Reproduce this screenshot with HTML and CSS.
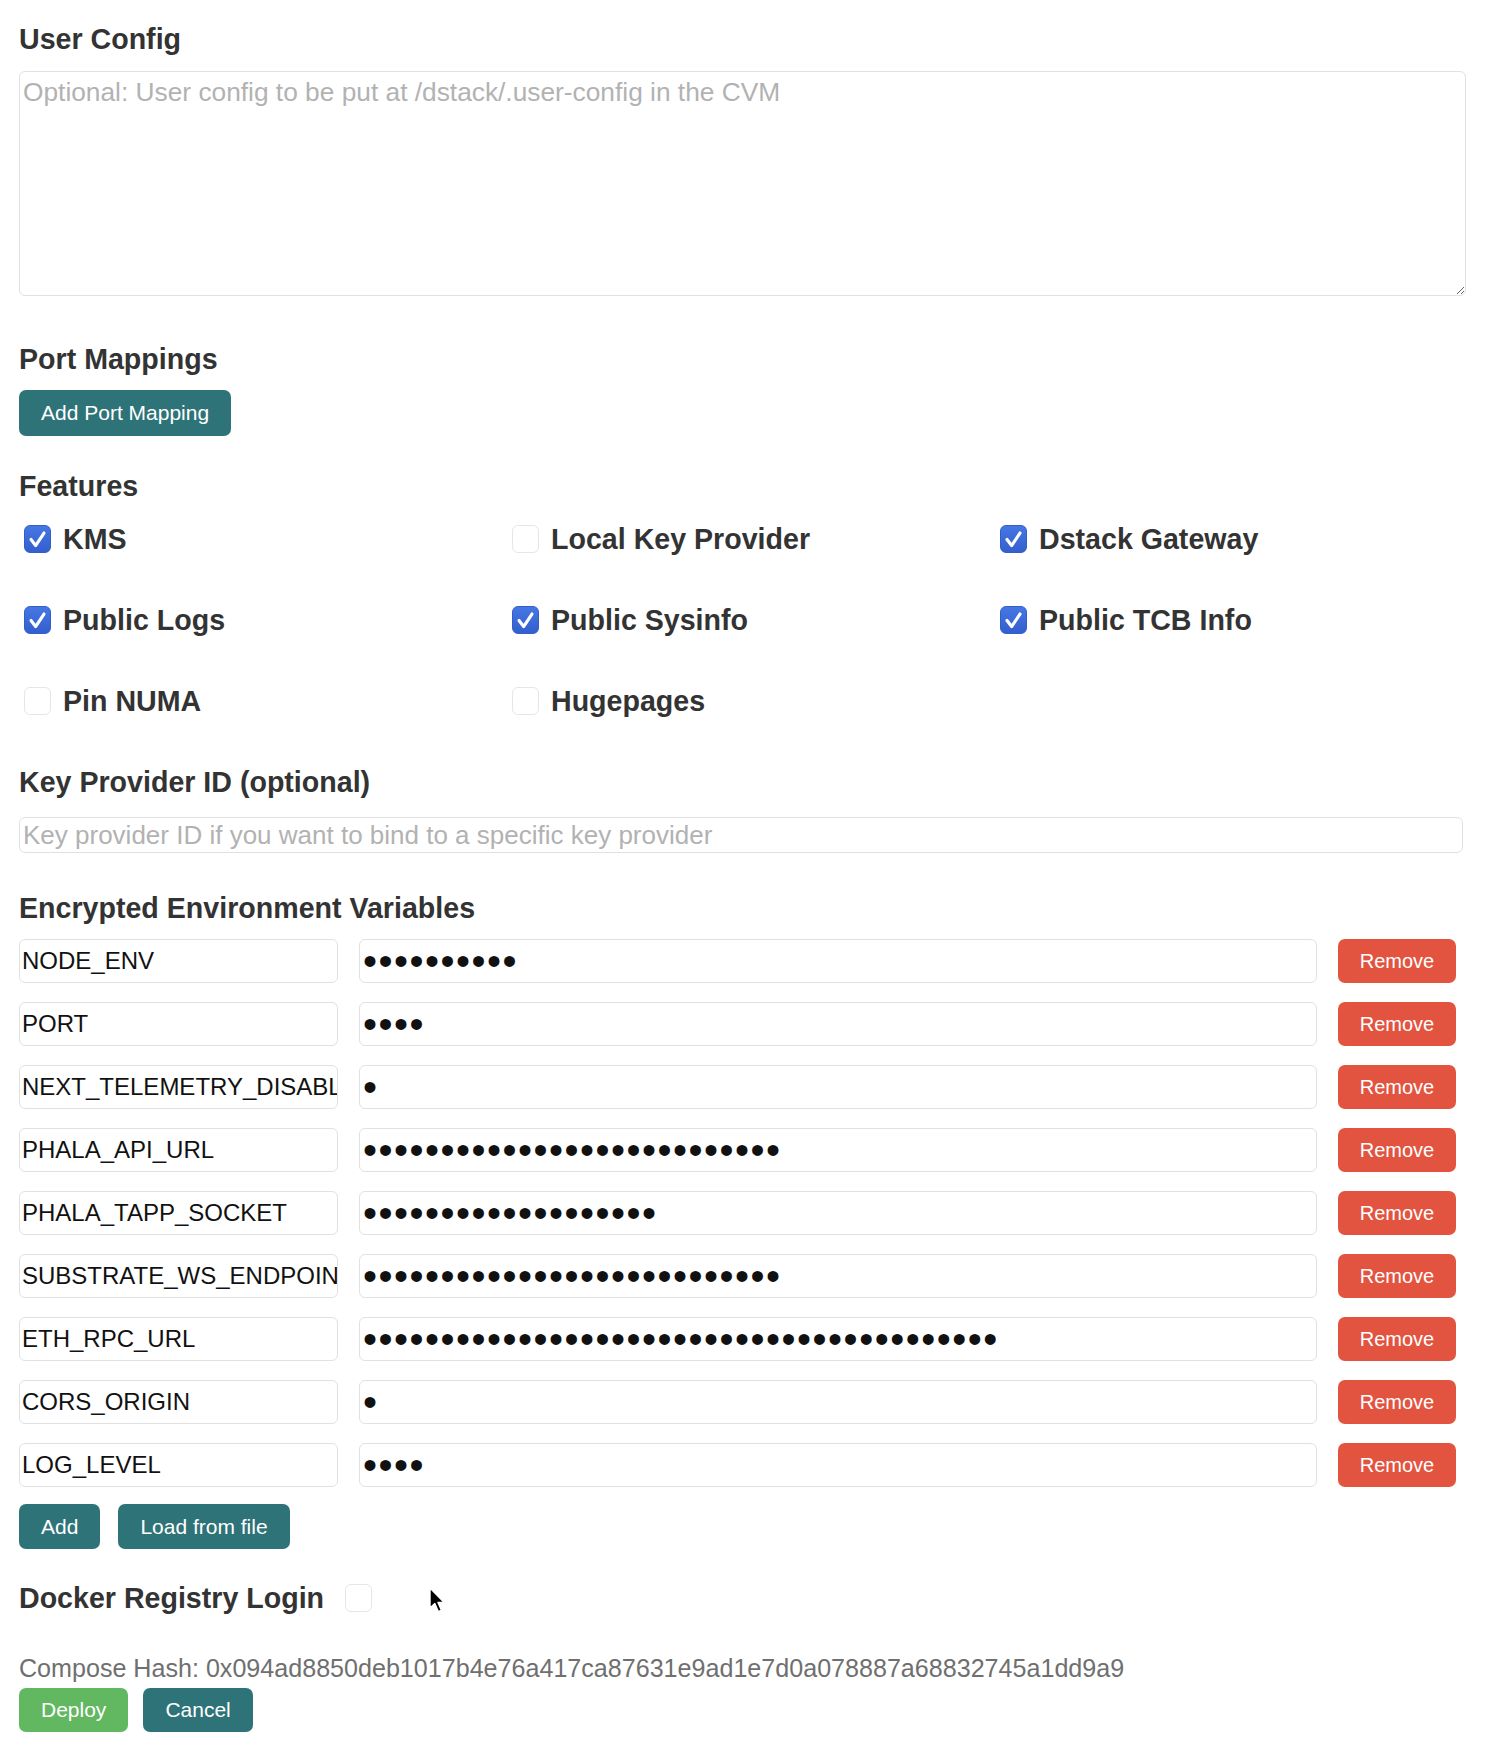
FILE: index.html
```html
<!DOCTYPE html>
<html lang="en">
<head>
<meta charset="utf-8">
<title>Deploy CVM</title>
<link rel="stylesheet" href="styles.css">
</head>
<body>
<form class="form">
  <div class="field">
    <label class="label" for="user-config">User Config</label>
    <textarea id="user-config" class="textarea" placeholder="Optional: User config to be put at /dstack/.user-config in the CVM"></textarea>
  </div>

  <div class="field port">
    <div class="label">Port Mappings</div>
    <button type="button" class="btn btn-teal btn-port">Add Port Mapping</button>
  </div>

  <div class="field features">
    <div class="label">Features</div>
    <div class="feature-grid">
      <label class="feature"><input type="checkbox" class="cb-input" checked><span class="cb"><svg viewBox="0 0 27 27" width="27" height="27"><path d="M6.5 13.5 L11.5 20 L20.5 6.5" /></svg></span><span>KMS</span></label>
      <label class="feature"><input type="checkbox" class="cb-input"><span class="cb"><svg viewBox="0 0 27 27" width="27" height="27"><path d="M6.5 13.5 L11.5 20 L20.5 6.5" /></svg></span><span>Local Key Provider</span></label>
      <label class="feature"><input type="checkbox" class="cb-input" checked><span class="cb"><svg viewBox="0 0 27 27" width="27" height="27"><path d="M6.5 13.5 L11.5 20 L20.5 6.5" /></svg></span><span>Dstack Gateway</span></label>
      <label class="feature"><input type="checkbox" class="cb-input" checked><span class="cb"><svg viewBox="0 0 27 27" width="27" height="27"><path d="M6.5 13.5 L11.5 20 L20.5 6.5" /></svg></span><span>Public Logs</span></label>
      <label class="feature"><input type="checkbox" class="cb-input" checked><span class="cb"><svg viewBox="0 0 27 27" width="27" height="27"><path d="M6.5 13.5 L11.5 20 L20.5 6.5" /></svg></span><span>Public Sysinfo</span></label>
      <label class="feature"><input type="checkbox" class="cb-input" checked><span class="cb"><svg viewBox="0 0 27 27" width="27" height="27"><path d="M6.5 13.5 L11.5 20 L20.5 6.5" /></svg></span><span>Public TCB Info</span></label>
      <label class="feature"><input type="checkbox" class="cb-input"><span class="cb"><svg viewBox="0 0 27 27" width="27" height="27"><path d="M6.5 13.5 L11.5 20 L20.5 6.5" /></svg></span><span>Pin NUMA</span></label>
      <label class="feature"><input type="checkbox" class="cb-input"><span class="cb"><svg viewBox="0 0 27 27" width="27" height="27"><path d="M6.5 13.5 L11.5 20 L20.5 6.5" /></svg></span><span>Hugepages</span></label>
    </div>
  </div>

  <div class="field key-provider">
    <label class="label" for="kp">Key Provider ID (optional)</label>
    <input id="kp" type="text" class="input" placeholder="Key provider ID if you want to bind to a specific key provider">
  </div>

  <div class="field env">
    <div class="label">Encrypted Environment Variables</div>
    <div class="env-list">
      <div class="env-row"><input class="env-key" type="text" value="NODE_ENV"><input class="env-val" type="password" value="production"><button type="button" class="btn btn-remove">Remove</button></div>
      <div class="env-row"><input class="env-key" type="text" value="PORT"><input class="env-val" type="password" value="3000"><button type="button" class="btn btn-remove">Remove</button></div>
      <div class="env-row"><input class="env-key" type="text" value="NEXT_TELEMETRY_DISABLED"><input class="env-val" type="password" value="1"><button type="button" class="btn btn-remove">Remove</button></div>
      <div class="env-row"><input class="env-key" type="text" value="PHALA_API_URL"><input class="env-val" type="password" value="https://cloud-api.phala.net"><button type="button" class="btn btn-remove">Remove</button></div>
      <div class="env-row"><input class="env-key" type="text" value="PHALA_TAPP_SOCKET"><input class="env-val" type="password" value="/var/run/tappd.sock"><button type="button" class="btn btn-remove">Remove</button></div>
      <div class="env-row"><input class="env-key" type="text" value="SUBSTRATE_WS_ENDPOINT"><input class="env-val" type="password" value="wss://poc6.phala.network/ws"><button type="button" class="btn btn-remove">Remove</button></div>
      <div class="env-row"><input class="env-key" type="text" value="ETH_RPC_URL"><input class="env-val" type="password" value="https://eth-mainnet.example.com/v2/abcdef"><button type="button" class="btn btn-remove">Remove</button></div>
      <div class="env-row"><input class="env-key" type="text" value="CORS_ORIGIN"><input class="env-val" type="password" value="*"><button type="button" class="btn btn-remove">Remove</button></div>
      <div class="env-row"><input class="env-key" type="text" value="LOG_LEVEL"><input class="env-val" type="password" value="info"><button type="button" class="btn btn-remove">Remove</button></div>
    </div>
    <div class="env-actions">
      <button type="button" class="btn btn-teal">Add</button>
      <button type="button" class="btn btn-teal">Load from file</button>
    </div>
  </div>

  <div class="docker">
    <span class="label">Docker Registry Login</span>
    <label class="docker-cb"><input type="checkbox" class="cb-input"><span class="cb"><svg viewBox="0 0 27 27" width="27" height="27"><path d="M6.5 13.5 L11.5 20 L20.5 6.5" /></svg></span></label>
  </div>

  <div class="hash">Compose Hash: 0x094ad8850deb1017b4e76a417ca87631e9ad1e7d0a078887a68832745a1dd9a9</div>

  <div class="actions">
    <button type="button" class="btn btn-green">Deploy</button>
    <button type="button" class="btn btn-teal btn-cancel">Cancel</button>
  </div>
</form>

<svg class="cursor" viewBox="0 0 17 27" width="17" height="27" aria-hidden="true">
  <path d="M1 1 L1 21 L5.8 16.6 L9.3 24.6 L12.4 23.2 L9 15.4 L15.2 15.4 Z" fill="#000" stroke="#fff" stroke-width="1.4" stroke-linejoin="round"/>
</svg>
</body>
</html>
```

FILE: styles.css
```css
* {
  box-sizing: border-box;
}

body {
  margin: 0;
  background: #ffffff;
  font-family: "Liberation Sans", Arial, Helvetica, sans-serif;
  color: #333333;
  position: relative;
  min-height: 1760px;
}

.form {
  width: 1466px;
  padding: 23px 0 0 19px;
}

.label {
  display: block;
  font-weight: bold;
  font-size: 28.6px;
  line-height: 32px;
  color: #333333;
}

.textarea {
  display: block;
  width: 1447px;
  height: 225px;
  margin: 16px 0 0 0;
  border: 1px solid #e1e1e1;
  border-radius: 6px;
  padding: 5px 3px;
  font-family: "Liberation Sans", Arial, sans-serif;
  font-size: 26.3px;
  color: #222222;
  resize: vertical;
  outline: none;
}

.textarea::placeholder,
.input::placeholder {
  color: #b2b2b2;
}

.port {
  margin-top: 47px;
}

.btn {
  display: inline-flex;
  align-items: center;
  justify-content: center;
  height: 45px;
  padding: 0 22px;
  border: none;
  border-radius: 7px;
  color: #ffffff;
  font-family: "Liberation Sans", Arial, sans-serif;
  font-size: 21px;
  cursor: pointer;
}

.btn-teal {
  background: #2e7378;
}

.btn-port {
  margin-top: 15px;
  height: 46px;
}

.features {
  margin-top: 34px;
}

.feature-grid {
  margin-top: 17px;
  display: grid;
  grid-template-columns: repeat(3, 471px);
  column-gap: 17px;
  row-gap: 41px;
}

.feature {
  display: flex;
  align-items: center;
  height: 40px;
  gap: 12px;
  font-weight: bold;
  font-size: 28.6px;
  color: #333333;
}

.cb-input {
  position: absolute;
  opacity: 0;
  width: 0;
  height: 0;
  margin: 0;
}

.cb {
  flex: none;
  width: 27px;
  height: 28px;
  margin-left: 5px;
  border-radius: 6px;
  border: 1px solid #e6e6e6;
  background: #ffffff;
  display: flex;
  align-items: center;
  justify-content: center;
}

.cb svg {
  display: none;
}

.cb svg path {
  fill: none;
  stroke: #ffffff;
  stroke-width: 3.4;
  stroke-linecap: round;
  stroke-linejoin: round;
}

.cb-input:checked + .cb {
  background: linear-gradient(#4577e3, #345fcf);
  border-color: #335ec8;
}

.cb-input:checked + .cb svg {
  display: block;
}

.key-provider {
  margin-top: 45px;
}

.input {
  display: block;
  width: 1444px;
  height: 36px;
  margin-top: 19px;
  border: 1px solid #e1e1e1;
  border-radius: 6px;
  padding: 0 3px;
  font-family: "Liberation Sans", Arial, sans-serif;
  font-size: 26px;
  outline: none;
}

.env {
  margin-top: 39px;
}

.env-list {
  margin-top: 15px;
  display: flex;
  flex-direction: column;
  gap: 19px;
}

.env-row {
  display: grid;
  grid-template-columns: 319px 958px 118px;
  grid-template-rows: 44px;
  column-gap: 21px;
  align-items: center;
}

.env-key,
.env-val {
  height: 44px;
  border: 1px solid #e1e1e1;
  border-radius: 6px;
  padding: 0 3px;
  font-family: "Liberation Sans", Arial, sans-serif;
  color: #111111;
  outline: none;
  min-width: 0;
}

.env-key {
  font-size: 24px;
  padding: 0 0 0 2px;
}

.env-val {
  font-size: 40px;
  letter-spacing: 1.5px;
}

.btn-remove {
  background: #e2543f;
  font-size: 20px;
  padding: 0;
  width: 118px;
  height: 44px;
}

.env-actions {
  margin-top: 17px;
  display: flex;
  gap: 18px;
}

.docker {
  margin-top: 33px;
  display: flex;
  align-items: center;
  gap: 16px;
}

.docker-cb {
  display: flex;
  align-items: center;
}

.hash {
  margin-top: 39px;
  font-size: 25.1px;
  line-height: 30px;
  color: #6f6f6f;
}

.actions {
  margin-top: 5px;
  display: flex;
  gap: 15px;
}

.btn-green {
  background: #62b761;
  height: 44px;
}

.btn-cancel {
  height: 44px;
}

.cursor {
  position: absolute;
  left: 429px;
  top: 1587px;
}
```
